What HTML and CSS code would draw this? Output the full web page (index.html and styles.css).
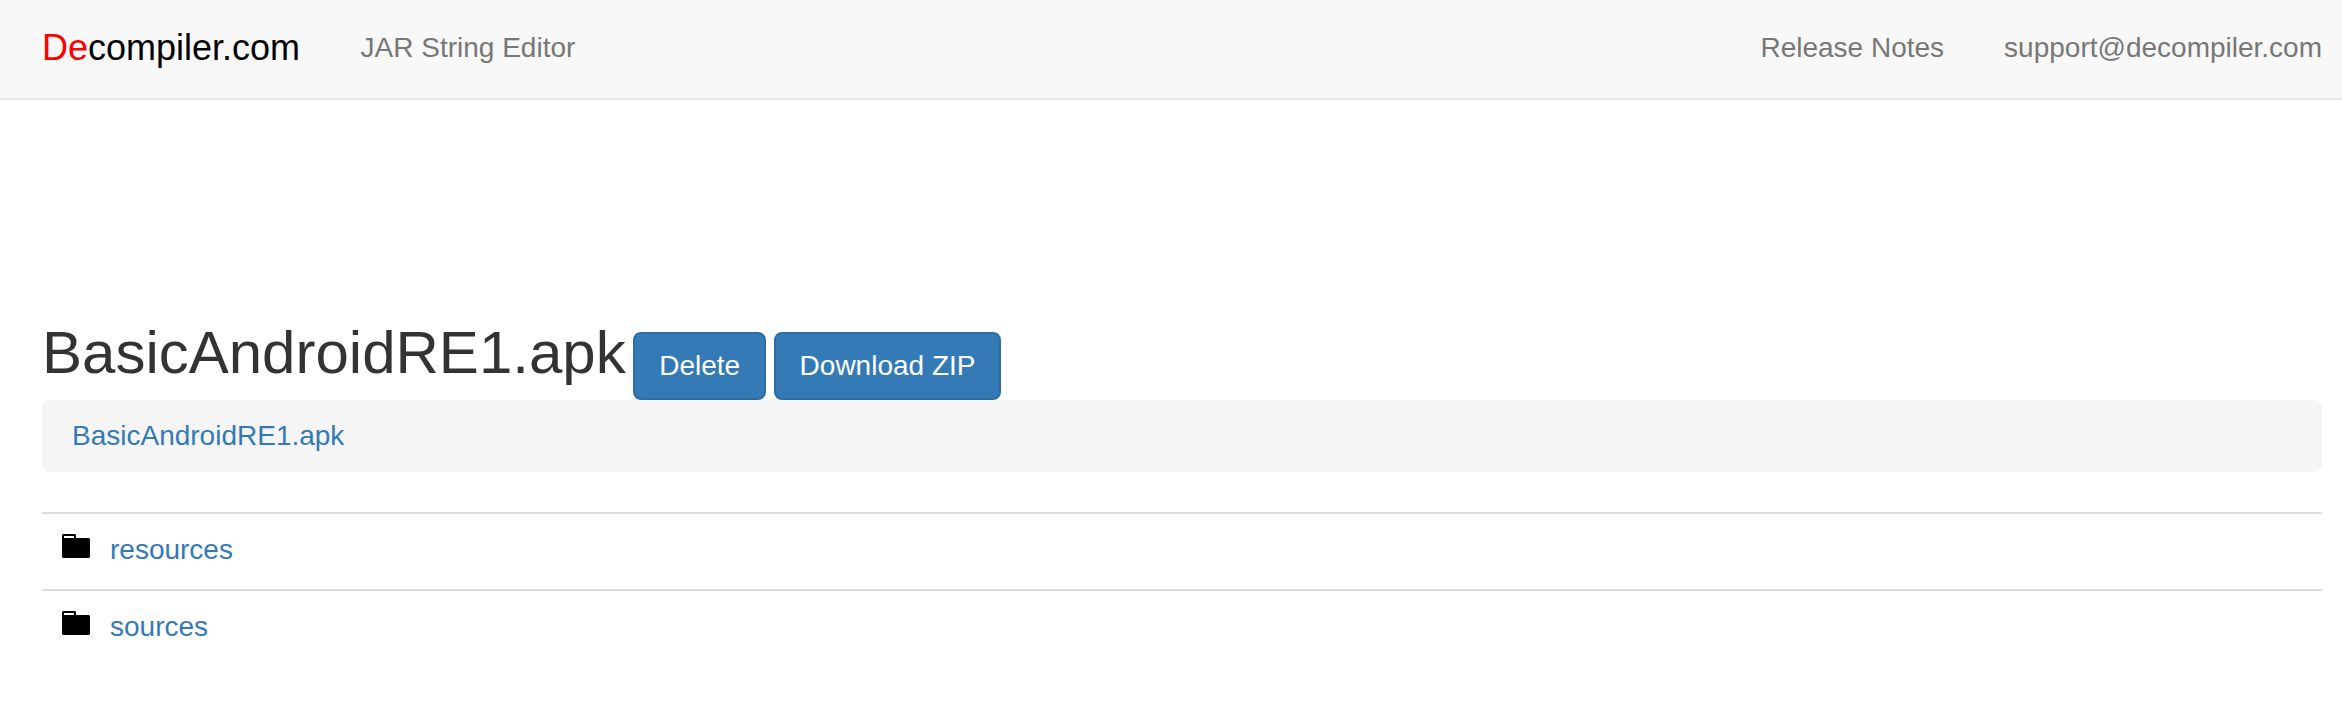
FILE: index.html
```html
<!DOCTYPE html>
<html lang="en">
<head>
<meta charset="utf-8">
<title>BasicAndroidRE1.apk - Decompiler.com</title>
<link rel="stylesheet" href="styles.css">
</head>
<body>
<nav class="navbar">
  <a class="brand" href="#"><span class="brand-accent">De</span>compiler.com</a>
  <a class="nav-link" href="#">JAR String Editor</a>
  <div class="nav-right">
    <a class="nav-link" href="#">Release Notes</a>
    <a class="nav-link" href="#">support@decompiler.com</a>
  </div>
</nav>
<main class="container">
  <header class="title-row">
    <h1 class="title">BasicAndroidRE1.apk</h1>
    <a class="btn" href="#">Delete</a>
    <a class="btn" href="#">Download ZIP</a>
  </header>
  <div class="breadcrumb"><a href="#">BasicAndroidRE1.apk</a></div>
  <ul class="files">
    <li class="file">
      <svg class="folder" viewBox="0 0 28 24"><path d="M1 0H13L14 1V4H27L28 5V23L27 24H1L0 23V1ZM2 2V4H12V2Z" fill-rule="evenodd"/></svg>
      <a href="#">resources</a>
    </li>
    <li class="file">
      <svg class="folder" viewBox="0 0 28 24"><path d="M1 0H13L14 1V4H27L28 5V23L27 24H1L0 23V1ZM2 2V4H12V2Z" fill-rule="evenodd"/></svg>
      <a href="#">sources</a>
    </li>
  </ul>
</main>
</body>
</html>
```
FILE: styles.css
```css
* { box-sizing: border-box; }
body {
  margin: 0;
  background: #fff;
  color: #333;
  font: 28px/40px "Liberation Sans", Arial, sans-serif;
}
a { color: #337ab7; text-decoration: none; }
.navbar {
  display: flex;
  align-items: flex-start;
  height: 100px;
  padding: 28px 20px 0 42px;
  background: #f8f8f8;
  border-bottom: 2px solid #e7e7e7;
}
.brand { margin-right: 60.5px; color: #000; font-size: 36px; }
.brand-accent { color: #f00; }
.navbar .nav-link { color: #777; }
.nav-right { display: flex; gap: 60px; margin-left: auto; }
.container { padding: 220px 20px 0 42px; }
.title-row { display: flex; align-items: flex-start; gap: 7.5px; height: 80px; }
.title { margin: 0; font-size: 60px; font-weight: 400; line-height: 66px; }
.btn {
  margin-top: 12px;
  padding: 12px 24px;
  border: 2px solid #2e6da4;
  border-radius: 8px;
  background: #337ab7;
  color: #fff;
}
.breadcrumb {
  height: 72px;
  padding: 16px 30px;
  border-radius: 8px;
  background: #f5f5f5;
}
.files { margin: 40px 0 0; padding: 0; list-style: none; }
.file {
  display: flex;
  align-items: flex-start;
  gap: 20px;
  height: 77px;
  padding: 16px 20px;
  border-top: 2px solid #ddd;
}
.folder { width: 28px; height: 24px; margin-top: 4px; }
```
